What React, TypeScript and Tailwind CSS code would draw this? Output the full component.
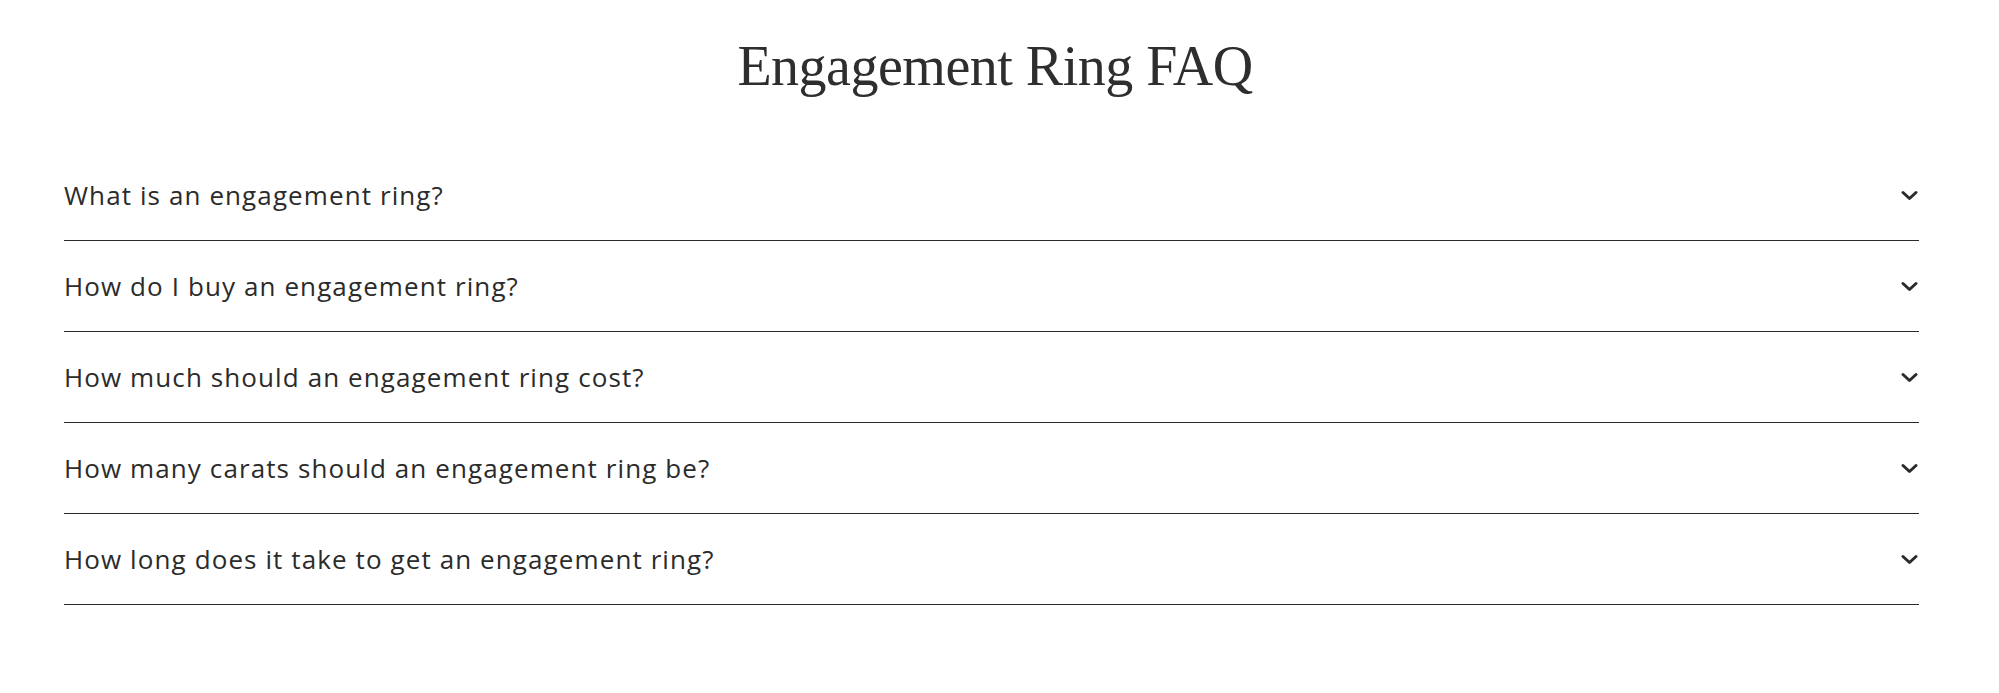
import { useState } from 'react'

const faqs = [
  'What is an engagement ring?',
  'How do I buy an engagement ring?',
  'How much should an engagement ring cost?',
  'How many carats should an engagement ring be?',
  'How long does it take to get an engagement ring?',
]

function Chevron({ open }: { open: boolean }) {
  return (
    <svg
      width="17"
      height="11"
      viewBox="0 0 17 11"
      fill="none"
      className={open ? 'rotate-180' : ''}
    >
      <polyline points="2,2.5 8.5,8.5 15,2.5" stroke="#2b2b2b" strokeWidth="3" strokeLinecap="round" strokeLinejoin="round" />
    </svg>
  )
}

export default function App() {
  const [openIdx, setOpenIdx] = useState<number | null>(null)

  return (
    <section className="min-h-[693px] bg-white pl-[64px] pr-[80px] text-[#2b2b2b]">
      <h1 className="ml-[7px] pt-[34px] text-center font-['Liberation_Serif',serif] text-[56px] leading-[64px] tracking-[-0.5px] text-[#2e2e2e]">
        Engagement Ring FAQ
      </h1>
      <div className="mt-[52px]">
        {faqs.map((q, i) => (
          <div key={q} className="border-b border-[#2a2a2a]">
            <button
              className="flex h-[90px] w-full cursor-pointer items-center justify-between text-left"
              onClick={() => setOpenIdx(openIdx === i ? null : i)}
            >
              <span className="font-['Open_Sans',sans-serif] text-[26px] font-medium tracking-[1.1px] text-[#2b2b2b]">{q}</span>
              <span className="mr-[1px]">
                <Chevron open={openIdx === i} />
              </span>
            </button>
          </div>
        ))}
      </div>
    </section>
  )
}
